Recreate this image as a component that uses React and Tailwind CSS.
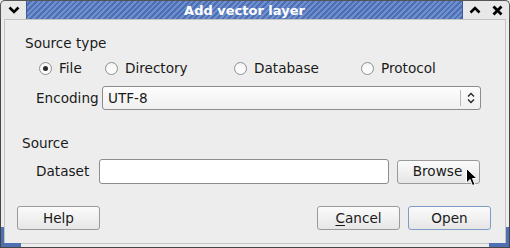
const font = { fontFamily: '"DejaVu Sans", "Liberation Sans", sans-serif' }

const Radio = ({ checked, label }) => (
    <div className="flex items-center gap-[7px]">
        <div className="w-[13px] h-[13px] rounded-full border border-[#8f8f8f] bg-gradient-to-b from-[#f4f4f4] to-white flex items-center justify-center">
            {checked && <div className="w-[5px] h-[5px] rounded-full bg-[#2a2a2a]" />}
        </div>
        <span>{label}</span>
    </div>
)

const Button = ({ children, className = '' }) => (
    <div className={`h-[24px] w-[83px] rounded-[3px] border bg-gradient-to-b from-[#fbfbfb] to-[#e6e6e6] flex items-center justify-center ${className}`}>
        {children}
    </div>
)

export default function App() {
    return (
        <div className="w-[510px] h-[248px] bg-[#ededed] text-[13.6px] text-[#1a1a1a] flex flex-col relative" style={font}>
            {/* Title bar */}
            <div className="h-[19px] flex border-t border-l border-r border-[#555] rounded-t-[5px] bg-[#e8e8e8]">
                <div className="w-[25px] flex items-center justify-center">
                    <svg width="12" height="8" viewBox="0 0 12 8"><path d="M1.5 1.5 L6 6 L10.5 1.5" stroke="#000" strokeWidth="2.6" fill="none" /></svg>
                </div>
                <div className="flex-1 border-l border-r border-[#3f5a94] bg-[#5a7cc0] bg-[repeating-linear-gradient(135deg,#6e8fd0_0px,#6e8fd0_2px,#4f6fb3_2px,#4f6fb3_4px)] flex items-center justify-center">
                    <span className="text-white font-bold text-[13px] leading-none">Add vector layer</span>
                </div>
                <div className="w-[23px] flex items-center justify-center">
                    <svg width="12" height="8" viewBox="0 0 12 8"><path d="M1.5 6.5 L6 2 L10.5 6.5" stroke="#000" strokeWidth="2.6" fill="none" /></svg>
                </div>
                <div className="w-[23px] flex items-center justify-center">
                    <svg width="11" height="11" viewBox="0 0 11 11"><path d="M1.5 1.5 L9.5 9.5 M9.5 1.5 L1.5 9.5" stroke="#000" strokeWidth="2.8" fill="none" /></svg>
                </div>
            </div>

            {/* Body */}
            <div className="flex-1 border-l border-r border-b border-[#444] px-[3px] pb-[3px] flex">
                <div className="flex-1 border-l border-r border-b border-t border-[#c4c4c4] flex flex-col pl-[15px] pr-[14px]">
                    <div className="mt-[14px] ml-[5px] leading-[18px]">Source type</div>
                    <div className="flex items-center mt-[7px] ml-[19px] leading-[18px]">
                        <div className="w-[66px]"><Radio checked label="File" /></div>
                        <div className="w-[129px]"><Radio label="Directory" /></div>
                        <div className="w-[127px]"><Radio label="Database" /></div>
                        <Radio label="Protocol" />
                    </div>
                    <div className="flex items-center mt-[9px] ml-[16px]">
                        <span className="w-[66px]">Encoding</span>
                        <div className="h-[24px] w-[379px] rounded-[3px] border border-[#8c8c8c] bg-gradient-to-b from-[#fdfdfd] to-[#f0f0f0] flex items-center">
                            <span className="flex-1 pl-[5px]">UTF-8</span>
                            <div className="w-px h-[16px] bg-[#b8b8b8]" />
                            <div className="w-[19px] flex items-center justify-center">
                                <svg width="8" height="12" viewBox="0 0 8 12"><path d="M1 4.5 L4 1.5 L7 4.5 M1 7.5 L4 10.5 L7 7.5" stroke="#222" strokeWidth="1.3" fill="none" /></svg>
                            </div>
                        </div>
                    </div>
                    <div className="mt-[24px] ml-[2px] leading-[18px]">Source</div>
                    <div className="flex items-center mt-[7px] ml-[16px]">
                        <span className="w-[63px]">Dataset</span>
                        <div className="h-[25px] w-[290px] rounded-[3px] border border-[#8c8c8c] bg-white" />
                        <Button className="ml-[8px] border-[#9a9a9a] relative">
                            <span className="pr-[2px]">Browse</span>
                            <svg className="absolute left-[68px] top-[7px]" width="12" height="19" viewBox="0 0 12 19">
                                <path d="M0.5 0.5 L0.5 15 L4 11.5 L6.5 17.5 L9 16.5 L6.5 10.5 L11 10.5 Z" fill="#000" stroke="#fff" strokeWidth="1" />
                            </svg>
                        </Button>
                    </div>
                    <div className="flex items-center mt-[22px]">
                        <Button className="border-[#9a9a9a] -ml-[3px]">Help</Button>
                        <div className="flex-1" />
                        <Button className="border-[#9a9a9a]"><span><span className="underline underline-offset-2">C</span>ancel</span></Button>
                        <Button className="ml-[8px] border-[#7f9cc9]">Open</Button>
                    </div>
                </div>
            </div>

            {/* resize corner marks */}
            <div className="absolute left-[1px] bottom-[1px] w-[20px] h-[4px] bg-[#4f6fb3]" />
            <div className="absolute left-[1px] bottom-[1px] w-[3px] h-[20px] bg-[#4f6fb3]" />
            <div className="absolute right-[1px] bottom-[1px] w-[20px] h-[4px] bg-[#4f6fb3]" />
            <div className="absolute right-[1px] bottom-[1px] w-[3px] h-[20px] bg-[#4f6fb3]" />
        </div>
    )
}
